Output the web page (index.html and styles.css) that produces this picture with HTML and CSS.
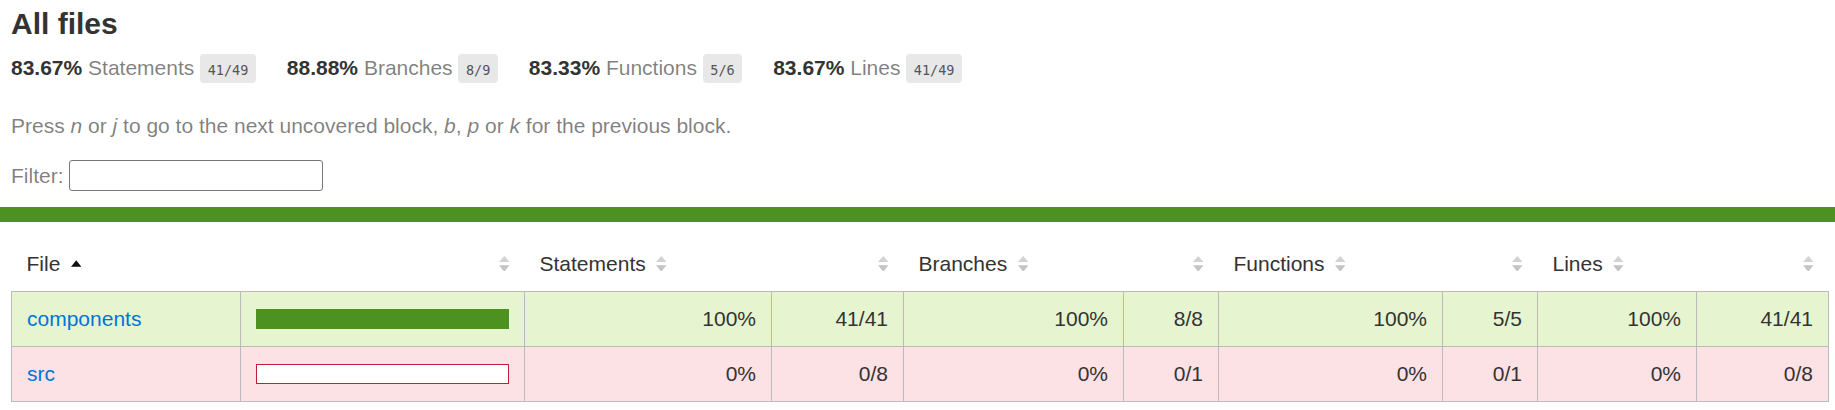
FILE: index.html
```html
<!doctype html>
<html lang="en">
<head>
<meta charset="utf-8">
<title>Code coverage report for All files</title>
<link rel="stylesheet" href="styles.css">
</head>
<body>
<div class="wrapper">
  <div class="summary">
    <h1>All files</h1>
    <div class="stats">
      <div class="stat"><span class="strong">83.67%</span> <span class="quiet">Statements</span> <span class="fraction">41/49</span></div>
      <div class="stat"><span class="strong">88.88%</span> <span class="quiet">Branches</span> <span class="fraction">8/9</span></div>
      <div class="stat"><span class="strong">83.33%</span> <span class="quiet">Functions</span> <span class="fraction">5/6</span></div>
      <div class="stat"><span class="strong">83.67%</span> <span class="quiet">Lines</span> <span class="fraction">41/49</span></div>
    </div>
    <p class="quiet hint">Press <em>n</em> or <em>j</em> to go to the next uncovered block, <em>b</em>, <em>p</em> or <em>k</em> for the previous block.</p>
    <div class="quiet filter"><span>Filter:</span><input type="search" id="fileSearch" aria-label="Filter"></div>
  </div>
  <div class="status-line high"></div>
  <div class="table-wrap">
    <table class="coverage-summary">
      <colgroup>
        <col class="c-file"><col class="c-pic"><col class="c-spct"><col class="c-sabs"><col class="c-bpct"><col class="c-babs"><col class="c-fpct"><col class="c-fabs"><col class="c-lpct"><col class="c-labs">
      </colgroup>
      <thead>
        <tr>
          <th class="file">File<svg class="sorter" viewBox="0 0 7 10" width="10.5" height="15"><path d="M0 7.2L3.5 2.8L7 7.2Z" fill="#111"/></svg></th>
          <th class="pic"><svg class="sorter" viewBox="0 0 7 10" width="10.5" height="15"><path d="M3.5 0L7 4H0Z" fill="#d2d2d2"/><path d="M3.5 10.5L0 6.2H7Z" fill="#c4c4c4"/></svg></th>
          <th class="pct">Statements<svg class="sorter" viewBox="0 0 7 10" width="10.5" height="15"><path d="M3.5 0L7 4H0Z" fill="#d2d2d2"/><path d="M3.5 10.5L0 6.2H7Z" fill="#c4c4c4"/></svg></th>
          <th class="abs"><svg class="sorter" viewBox="0 0 7 10" width="10.5" height="15"><path d="M3.5 0L7 4H0Z" fill="#d2d2d2"/><path d="M3.5 10.5L0 6.2H7Z" fill="#c4c4c4"/></svg></th>
          <th class="pct">Branches<svg class="sorter" viewBox="0 0 7 10" width="10.5" height="15"><path d="M3.5 0L7 4H0Z" fill="#d2d2d2"/><path d="M3.5 10.5L0 6.2H7Z" fill="#c4c4c4"/></svg></th>
          <th class="abs"><svg class="sorter" viewBox="0 0 7 10" width="10.5" height="15"><path d="M3.5 0L7 4H0Z" fill="#d2d2d2"/><path d="M3.5 10.5L0 6.2H7Z" fill="#c4c4c4"/></svg></th>
          <th class="pct">Functions<svg class="sorter" viewBox="0 0 7 10" width="10.5" height="15"><path d="M3.5 0L7 4H0Z" fill="#d2d2d2"/><path d="M3.5 10.5L0 6.2H7Z" fill="#c4c4c4"/></svg></th>
          <th class="abs"><svg class="sorter" viewBox="0 0 7 10" width="10.5" height="15"><path d="M3.5 0L7 4H0Z" fill="#d2d2d2"/><path d="M3.5 10.5L0 6.2H7Z" fill="#c4c4c4"/></svg></th>
          <th class="pct">Lines<svg class="sorter" viewBox="0 0 7 10" width="10.5" height="15"><path d="M3.5 0L7 4H0Z" fill="#d2d2d2"/><path d="M3.5 10.5L0 6.2H7Z" fill="#c4c4c4"/></svg></th>
          <th class="abs"><svg class="sorter" viewBox="0 0 7 10" width="10.5" height="15"><path d="M3.5 0L7 4H0Z" fill="#d2d2d2"/><path d="M3.5 10.5L0 6.2H7Z" fill="#c4c4c4"/></svg></th>
        </tr>
      </thead>
      <tbody>
        <tr class="high">
          <td class="file"><a href="#components">components</a></td>
          <td class="pic"><div class="chart"><div class="cover-fill" style="width: 100%"></div></div></td>
          <td class="pct">100%</td>
          <td class="abs">41/41</td>
          <td class="pct">100%</td>
          <td class="abs">8/8</td>
          <td class="pct">100%</td>
          <td class="abs">5/5</td>
          <td class="pct">100%</td>
          <td class="abs">41/41</td>
        </tr>
        <tr class="low">
          <td class="file"><a href="#src">src</a></td>
          <td class="pic"><div class="chart"><div class="cover-fill" style="width: 0%"></div></div></td>
          <td class="pct">0%</td>
          <td class="abs">0/8</td>
          <td class="pct">0%</td>
          <td class="abs">0/1</td>
          <td class="pct">0%</td>
          <td class="abs">0/1</td>
          <td class="pct">0%</td>
          <td class="abs">0/8</td>
        </tr>
      </tbody>
    </table>
  </div>
</div>
</body>
</html>
```

FILE: styles.css
```css
*, *::before, *::after { box-sizing: border-box; }

html, body { margin: 0; padding: 0; }

body {
  font-family: "Liberation Sans", Arial, Helvetica, sans-serif;
  font-size: 21px;
  line-height: 24px;
  color: #333;
  background: #fff;
}

a { color: #0074D9; text-decoration: none; }

.summary {
  padding: 7px 15px 16px 11px;
}

h1 {
  margin: 0;
  font-size: 30px;
  line-height: 34px;
  font-weight: bold;
}

.stats {
  display: flex;
  align-items: baseline;
  column-gap: 31px;
  padding-top: 13px;
}

.stat { white-space: nowrap; }

.strong { font-weight: bold; }

.quiet { color: rgba(0, 0, 0, 0.5); }

.fraction {
  display: inline-block;
  height: 29px;
  padding: 4px 7.5px 0;
  line-height: 25px;
  font-family: "DejaVu Sans Mono", "Liberation Mono", monospace;
  font-size: 13.5px;
  color: #555;
  background: #E8E8E8;
  border-radius: 4px;
}

.hint {
  margin: 31px 0 0;
}

.hint em { font-style: italic; }

.filter {
  display: flex;
  align-items: center;
  gap: 5px;
  margin-top: 22px;
}

.filter input {
  -webkit-appearance: none;
  appearance: none;
  width: 254px;
  height: 31px;
  margin: 0;
  padding: 0 4px;
  border: 1px solid #767676;
  border-radius: 3px;
  background: #fff;
  font: inherit;
}

.status-line {
  height: 15px;
}

.status-line.high { background: rgb(77, 146, 33); }

.table-wrap {
  padding: 15px 0 0 11px;
}

.coverage-summary {
  border-collapse: collapse;
  table-layout: fixed;
  width: 1817px;
}

.c-file { width: 229px; }
.c-pic { width: 284px; }
.c-spct { width: 247px; }
.c-sabs { width: 132px; }
.c-bpct { width: 220px; }
.c-babs { width: 95px; }
.c-fpct { width: 224px; }
.c-fabs { width: 95px; }
.c-lpct { width: 159px; }
.c-labs { width: 132px; }

.coverage-summary tbody { border: 1px solid #bbb; }
.coverage-summary tr { border-bottom: 1px solid #bbb; }
.coverage-summary thead tr { border-bottom: none; }

.coverage-summary th,
.coverage-summary td {
  padding: 15px;
  line-height: 24px;
}

.coverage-summary th {
  text-align: left;
  font-weight: normal;
  white-space: nowrap;
}

.coverage-summary th.pic,
.coverage-summary th.abs,
.coverage-summary td.pct,
.coverage-summary td.abs { text-align: right; }

.coverage-summary td { border-right: 1px solid #bbb; white-space: nowrap; }
.coverage-summary td:last-child { border-right: none; }

.sorter {
  display: inline-block;
  margin-left: 10.5px;
  vertical-align: baseline;
}

.chart {
  height: 20px;
  line-height: 0;
  background: #fff;
}

.cover-fill { height: 100%; }

.high { background: rgb(230, 245, 208); }
.high .chart { border: 1px solid rgb(77, 146, 33); }
.high .cover-fill { background: rgb(77, 146, 33); }

.low { background: #FCE1E5; }
.low .chart { border: 1px solid #C21F39; }
.low .cover-fill { background: #C21F39; }
```
